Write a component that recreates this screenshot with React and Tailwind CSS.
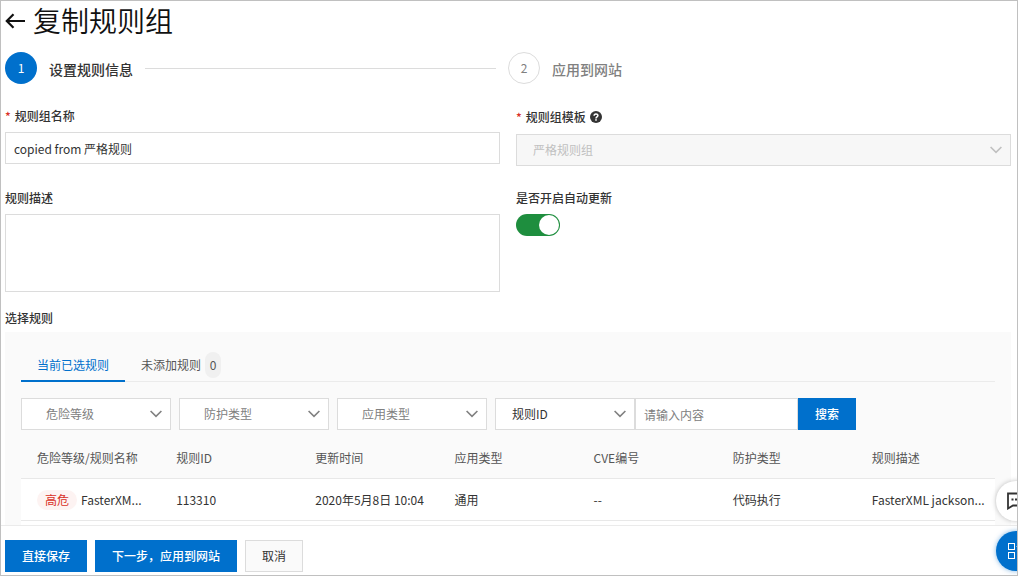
import { useState } from "react";

const FILTERS = ["危险等级", "防护类型", "应用类型"];

const COLUMNS = ["危险等级/规则名称", "规则ID", "更新时间", "应用类型", "CVE编号", "防护类型", "规则描述"];

const RULES = [
  {
    level: "高危",
    name: "FasterXM...",
    id: "113310",
    updated: "2020年5月8日 10:04",
    app: "通用",
    cve: "--",
    type: "代码执行",
    description: "FasterXML jackson...",
  },
];

function Chevron({ className }) {
  return (
    <svg
      className={`pointer-events-none absolute top-1/2 right-[9px] h-2 w-3 -translate-y-1/2 ${className}`}
      viewBox="0 0 12 8"
      fill="none"
      stroke="currentColor"
      strokeWidth="1.6"
    >
      <path d="M0.6 1 L6 6.4 L11.4 1" />
    </svg>
  );
}

function SelectBox({ id, label, text, width, className, disabled, chevron = "text-[#808080]" }) {
  return (
    <div className={`relative ${width}`}>
      <select
        id={id}
        aria-label={label}
        disabled={disabled}
        className={`block h-8 w-full appearance-none border border-[#dcdcdc] pr-6 opacity-100 outline-none ${className}`}
      >
        <option>{text}</option>
      </select>
      <Chevron className={chevron} />
    </div>
  );
}

function Steps() {
  return (
    <ol className="mt-[13px] flex text-sm">
      <li className="flex w-1/2 items-center gap-3 pr-3">
        <span className="flex size-8 items-center justify-center rounded-full bg-[#0070cc] text-xs text-white">1</span>
        <span className="pt-0.5 font-medium text-[#333]">设置规则信息</span>
        <span className="h-px flex-1 bg-[#dcdcdc]" />
      </li>
      <li className="flex w-1/2 items-center gap-3">
        <span className="flex size-8 items-center justify-center rounded-full border border-[#dcdcdc] text-xs text-[#808080]">
          2
        </span>
        <span className="pt-0.5 font-medium text-[#808080]">应用到网站</span>
      </li>
    </ol>
  );
}

function RuleForm() {
  const [name, setName] = useState("copied from 严格规则");
  const [autoUpdate, setAutoUpdate] = useState(true);

  return (
    <div className="mt-[22px] grid grid-cols-2 gap-x-4 gap-y-[22px]">
      <div>
        <label htmlFor="name" className="mb-1.5 block leading-5 font-medium">
          <span className="mr-1 text-[#d93026]">*</span>规则组名称
        </label>
        <input
          id="name"
          value={name}
          onChange={(e) => setName(e.target.value)}
          className="block h-8 w-full border border-[#dcdcdc] px-2 outline-none"
        />
      </div>
      <div>
        <div className="mb-1.5 flex h-[22px] items-center gap-1">
          <label htmlFor="template" className="leading-5 font-medium">
            <span className="mr-1 text-[#d93026]">*</span>规则组模板
          </label>
          <svg className="size-3" viewBox="0 0 12 12" fill="none">
            <circle cx="6" cy="6" r="6" fill="#333" />
            <path d="M4.1 4.7 C4.1 2.4 7.9 2.4 7.9 4.6 C7.9 6 6 5.9 6 7.4" stroke="#fff" strokeWidth="1.5" />
            <rect x="5.2" y="8.2" width="1.6" height="1.5" fill="#fff" />
          </svg>
        </div>
        <SelectBox
          id="template"
          text="严格规则组"
          width="w-full"
          className="bg-[#f7f7f7] pl-4 text-[#c0c0c0]"
          chevron="text-[#c0c0c0]"
          disabled
        />
      </div>
      <div>
        <label htmlFor="description" className="mb-1.5 block leading-5 font-medium">
          规则描述
        </label>
        <textarea
          id="description"
          className="block h-[78px] w-full resize-none border border-[#dcdcdc] px-2 py-1 outline-none"
        />
      </div>
      <div>
        <label htmlFor="auto-update" className="mb-1.5 block leading-5 font-medium">
          是否开启自动更新
        </label>
        <input
          id="auto-update"
          type="checkbox"
          role="switch"
          checked={autoUpdate}
          onChange={(e) => setAutoUpdate(e.target.checked)}
          className="flex h-[22px] w-11 appearance-none rounded-full bg-[#c0c0c0] p-px before:size-5 before:rounded-full before:bg-white checked:justify-end checked:bg-[#1e8e3e]"
        />
      </div>
    </div>
  );
}

function RuleTable() {
  return (
    <table className="mt-2 w-full table-fixed border-separate border-spacing-0 text-left">
      <thead>
        <tr className="h-[41px] text-[#555]">
          {COLUMNS.map((col) => (
            <th key={col} className="border-b border-[#e8e8e8] px-4 font-normal whitespace-nowrap">
              {col}
            </th>
          ))}
        </tr>
      </thead>
      <tbody>
        {RULES.map((rule) => (
          <tr key={rule.id} className="h-[42px] bg-white whitespace-nowrap *:border-b *:border-[#e8e8e8] *:px-4">
            <td>
              <div className="flex items-center gap-1">
                <span className="rounded-full bg-[#fdf3f2] px-2 leading-5 text-[#d93026]">{rule.level}</span>
                {rule.name}
              </div>
            </td>
            <td>{rule.id}</td>
            <td>{rule.updated}</td>
            <td>{rule.app}</td>
            <td>{rule.cve}</td>
            <td>{rule.type}</td>
            <td>{rule.description}</td>
          </tr>
        ))}
      </tbody>
    </table>
  );
}

function RulePicker() {
  return (
    <section className="mt-4">
      <h2 className="mb-1 leading-5 font-medium">选择规则</h2>
      <div className="bg-[#fafafa] p-4">
        <div role="tablist" className="flex h-[34px] border-b border-[#ebebeb]">
          <button
            role="tab"
            aria-selected="true"
            className="h-[34px] border-b-2 border-[#0070cc] px-4 pt-0.5 text-[#0070cc]"
          >
            当前已选规则
          </button>
          <button role="tab" aria-selected="false" className="flex h-[34px] items-center gap-1 px-4 text-[#555]">
            未添加规则
            <span className="flex h-[26px] w-4 items-center justify-center rounded-full bg-[#f0f0f0]">0</span>
          </button>
        </div>
        <div className="mt-4 flex">
          <div className="mr-2 flex gap-2">
            {FILTERS.map((filter) => (
              <SelectBox
                key={filter}
                label={filter}
                text={filter}
                width="w-[150px]"
                className="bg-white pl-6 text-[#808080]"
              />
            ))}
          </div>
          <SelectBox label="搜索字段" text="规则ID" width="w-[140px]" className="bg-white pl-4" />
          <input
            aria-label="请输入内容"
            placeholder="请输入内容"
            className="h-8 w-[163px] border border-[#dcdcdc] bg-white px-2 outline-none placeholder:text-[#808080]"
          />
          <button className="h-8 bg-[#0070cc] px-[17px] font-medium text-white">搜索</button>
        </div>
        <RuleTable />
        <div className="h-10 bg-white" />
      </div>
    </section>
  );
}

function FloatingTools() {
  return (
    <div className="absolute right-[-19px] bottom-1 flex flex-col gap-2.5">
      <button
        aria-label="咨询"
        className="flex size-10 items-center rounded-full bg-white pl-[11px] shadow-[0_0_5px_rgba(0,0,0,0.25)]"
      >
        <svg className="h-[18px] w-5" viewBox="0 0 20 18" fill="none">
          <path d="M1 1.5 H19 V13.5 H6 L1 16.5 Z" stroke="#333" strokeWidth="1.8" />
          <path d="M4.5 7.5 h2 M8 7.5 h2 M11.5 7.5 h2" stroke="#333" strokeWidth="2" />
        </svg>
      </button>
      <button
        aria-label="应用"
        className="flex size-10 items-center rounded-full bg-[#0070cc] pl-3 shadow-[0_0_5px_rgba(0,112,204,0.5)]"
      >
        <svg className="size-4" viewBox="0 0 16 16" fill="none" stroke="#fff" strokeWidth="1">
          <rect x="0.5" y="0.5" width="6" height="6" />
          <rect x="0.5" y="9.5" width="6" height="6" />
          <rect x="10.5" y="9.5" width="6" height="6" />
          <path d="M13 -0.5 L17 3.5 L13 7.5 L9 3.5 Z" />
        </svg>
      </button>
    </div>
  );
}

export default function App() {
  return (
    <div className="relative flex h-screen flex-col overflow-hidden border border-[#c0c0c0] bg-white font-['Noto_Sans_CJK_SC',sans-serif] text-xs text-[#333]">
      <main className="min-h-0 flex-1 overflow-hidden pr-1.5 pl-1">
        <header className="flex h-[38px] items-center gap-2">
          <a href="#back" aria-label="返回" className="pt-0.5">
            <svg className="h-4 w-5" viewBox="0 0 20 16" fill="none" stroke="#111" strokeWidth="2.2">
              <path d="M20 8 H2 M8.5 1.2 L1.8 8 L8.5 14.8" />
            </svg>
          </a>
          <h1 className="text-[28px] leading-[38px] font-[350] text-[#111]">复制规则组</h1>
        </header>
        <Steps />
        <RuleForm />
        <RulePicker />
      </main>
      <footer className="flex gap-2 border-t border-[#ebebeb] bg-white pt-3.5 pb-[3px] pl-1">
        <button className="h-8 bg-[#0070cc] px-[17px] font-medium text-white">直接保存</button>
        <button className="h-8 bg-[#0070cc] px-[17px] font-medium text-white">下一步，应用到网站</button>
        <button className="h-8 border border-[#dcdcdc] bg-[#fafafa] px-4">取消</button>
      </footer>
      <FloatingTools />
    </div>
  );
}
